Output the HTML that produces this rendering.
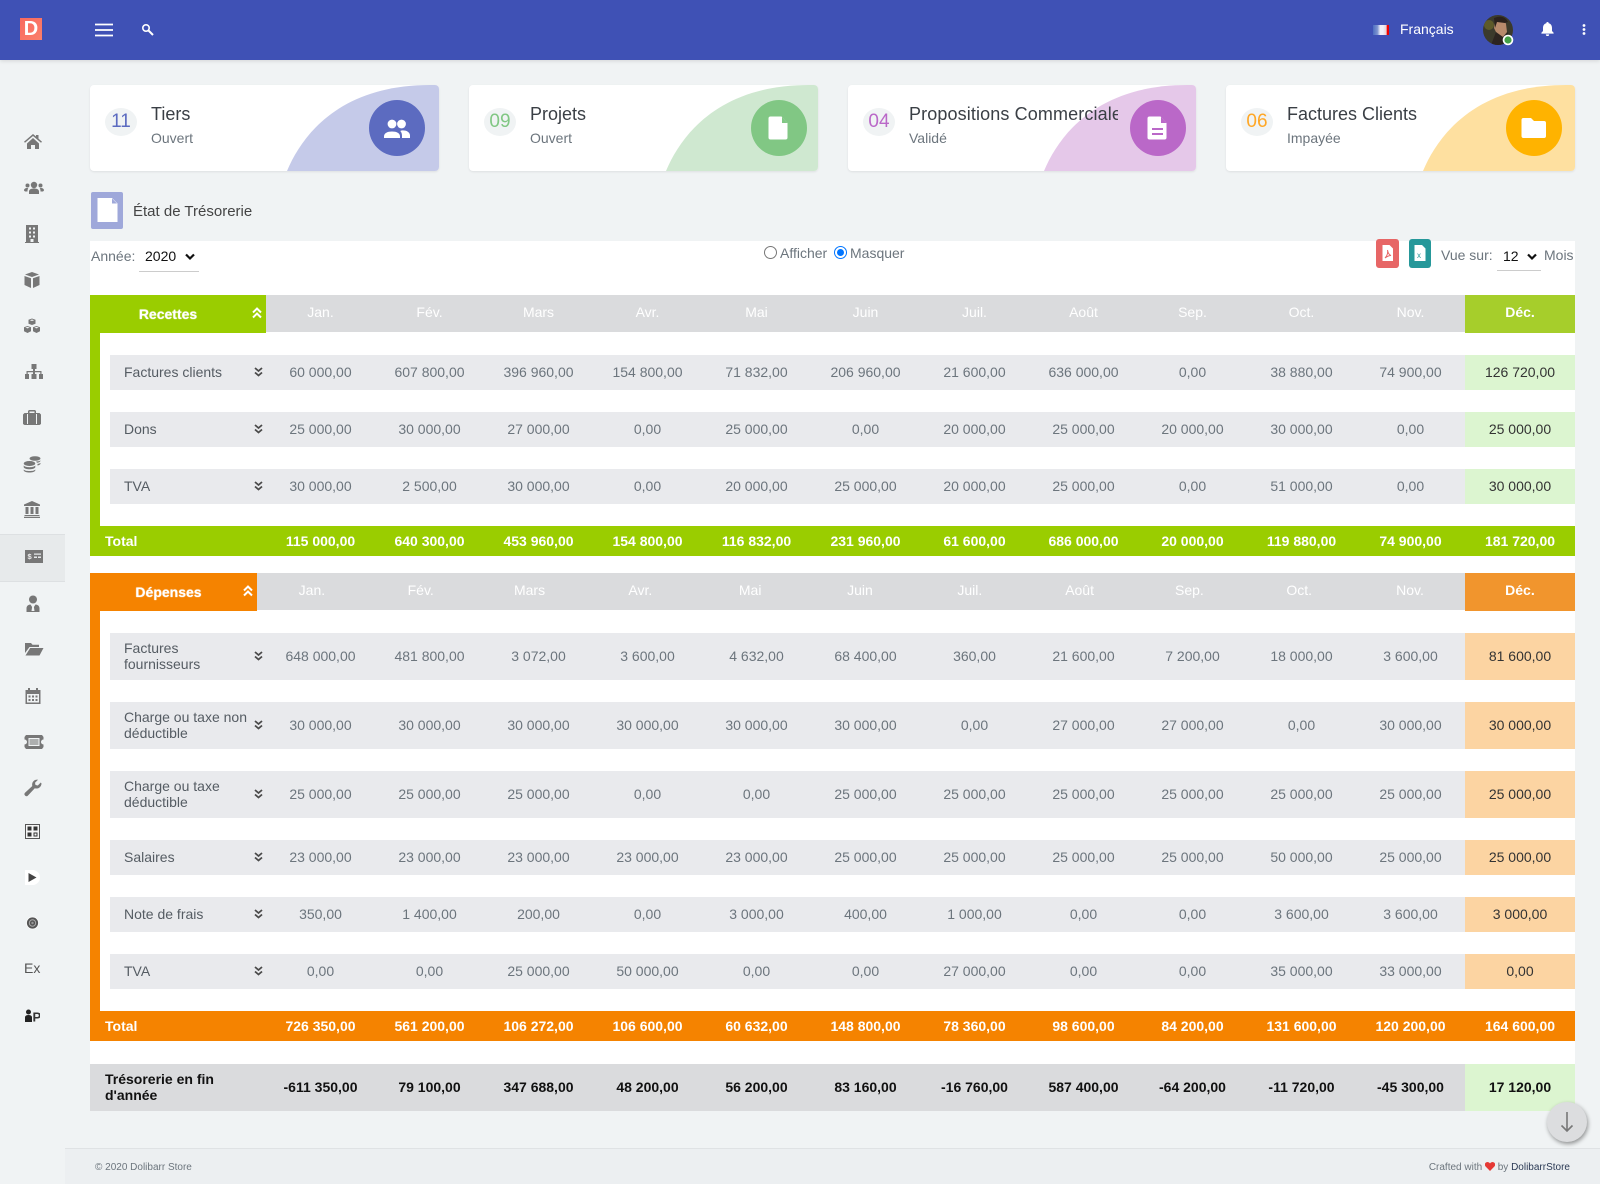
<!DOCTYPE html>
<html lang="fr"><head><meta charset="utf-8"><title>État de Trésorerie</title>
<style>
*{box-sizing:border-box}
html,body{margin:0;padding:0}
body{width:1600px;height:1184px;position:relative;overflow:hidden;background:#f0f3f4;font-family:"Liberation Sans",Arial,sans-serif;font-size:14px;color:#6c757d}
.a{position:absolute}
.top{left:0;top:0;width:1600px;height:60px;background:#3f51b5;box-shadow:0 1px 4px rgba(0,0,0,.12)}
.logo{left:20px;top:18px;width:22px;height:22px;background:linear-gradient(135deg,#f8695f,#fb7f6b);color:#fff;font-weight:bold;font-size:20px;line-height:22px;text-align:center}
.ic{position:absolute;left:23px;width:20px;height:20px;fill:#777}
.card{position:absolute;top:85px;height:86px;width:349px;background:#fff;border-radius:4px;box-shadow:0 1px 2px rgba(0,0,0,.08);overflow:hidden}
.sh{position:absolute;right:0;bottom:0;width:152px;height:86px}
.circ{position:absolute;left:279px;top:15px;width:56px;height:56px;border-radius:50%}
.num{position:absolute;left:15px;top:23px;width:32px;height:28px;border-radius:50%;background:#f0f3f4;font-size:19px;line-height:28px;text-align:center}
.ttl{position:absolute;left:61px;top:18px;font-size:18px;line-height:22px;color:#3a3f45;white-space:nowrap}
.sub{position:absolute;left:61px;top:45px;font-size:14px;line-height:17px;color:#6c757d}
.panel{left:90px;top:241px;width:1485px;height:870px;background:#fff}
.r,.t,.h{position:absolute;display:grid;align-items:center;text-align:center}
.r{left:110px;width:1465px;height:35px;background:#e9eaed;grid-template-columns:156px repeat(11,109px) 110px;color:#6c757d}
.r .l{text-align:left;padding-left:14px;padding-bottom:2px;line-height:16px;color:#555c63;padding-right:18px;position:relative}
.r .l svg{position:absolute;left:144px;top:50%;margin-top:-6px}
.r.tall{height:47px}
.r>span,.t>span,.h>span,.tr>span{display:flex;align-items:center;justify-content:center;height:100%}
.r>span,.tr>span{padding-bottom:2px}
.r>span:last-child{color:#333}
.g>span:last-child{background:#dcf5d0}
.o>span:last-child{background:#fcd4a2}
.t{left:90px;width:1485px;height:30px;grid-template-columns:176px repeat(11,109px) 110px;color:#fff;font-weight:bold}
.t b{text-align:left;padding-left:15px}
.h{left:90px;width:1485px;height:37px;background:#dadbdd;color:#fff}
.h>span{padding-bottom:4px}
.h>span:last-child{font-weight:bold}
.h .first{position:relative;display:flex;align-items:center;justify-content:center;font-weight:bold;height:38px;align-self:start;text-shadow:0 0 1px #fff}
.h .first svg{position:absolute;top:12px}
.tr{position:absolute;left:90px;top:1064px;width:1485px;height:47px;background:#dadbdd;display:grid;align-items:center;grid-template-columns:176px repeat(11,109px) 110px;color:#111;font-weight:bold;text-align:center}
.tr b{text-align:left;padding-left:15px;padding-bottom:2px;line-height:16px}
.tr>span:last-child{background:#dcf5d0}
.rad{position:absolute;top:246px;width:13px;height:13px;border-radius:50%;border:1px solid #767676;background:#fff}
.lb{position:absolute;white-space:nowrap;line-height:16px}
.foot{left:65px;top:1148px;width:1535px;height:36px;background:#eceff1;border-top:1px solid #dfe2e4;font-size:10px;color:#6c757d}
</style></head><body>

<div class="a top"></div>
<div class="a logo">D</div>
<svg class="a" style="left:95px;top:23px" width="18" height="14"><path d="M0 1.500h18M0 7h18M0 12.500h18" stroke="#fff" stroke-width="1.800"/></svg>
<svg class="a" style="left:141px;top:23px" width="13" height="13" fill="none" stroke="#fff"><circle cx="5" cy="5" r="3.200" stroke-width="1.600"/><path d="M7.500 7.500l4.500 4.500" stroke-width="2"/></svg>
<div class="a" style="left:1373px;top:25px;width:16px;height:10px;background:linear-gradient(90deg,#4d6ec0 0,#7f95d0 28%,#eef0f8 45%,#eef0f8 62%,#e6cfd2 84%,#e00 87%);"></div>
<div class="a" style="left:1400px;top:20px;font-size:14px;line-height:18px;color:#fff">Français</div>
<svg class="a" style="left:1483px;top:15px" width="32" height="32">
<defs><clipPath id="av"><circle cx="15" cy="15" r="15"/></clipPath></defs>
<g clip-path="url(#av)"><rect width="30" height="30" fill="#3b3a2c"/><circle cx="6" cy="10" r="5" fill="#5d5a2a"/><path d="M12 4q9-3 11 5l1 8-4 5-6-3-3-6z" fill="#b78a6c"/><path d="M11 3q10-4 14 4l-3 1-8-1-2 6z" fill="#2a211c"/><path d="M13 17l7 5 5-5 2 13H8z" fill="#2c2420"/></g>
<circle cx="25" cy="25" r="5.300" fill="#fff"/><circle cx="25" cy="25" r="3.600" fill="#43a047"/></svg>
<svg class="a" style="left:1541px;top:22px" width="13" height="14" fill="#fff"><path d="M6.500 0a1.200 1.200 0 0 1 1.200 1.300C10 1.900 11 3.800 11 6v3l1.600 1.800v.8H.4v-.8L2 9V6c0-2.200 1-4.100 3.300-4.700A1.200 1.200 0 0 1 6.500 0zM4.800 12.400h3.400a1.700 1.700 0 0 1-3.400 0z"/></svg>
<svg class="a" style="left:1582px;top:24px" width="4" height="11" fill="#fff"><circle cx="2" cy="1.500" r="1.400"/><circle cx="2" cy="5.500" r="1.400"/><circle cx="2" cy="9.500" r="1.400"/></svg>

<!-- sidebar -->
<div class="a" style="left:0;top:534px;width:65px;height:48px;background:#e7eaeb;border-top:1px solid #dde0e2;border-bottom:1px solid #dde0e2"></div>
<svg class="ic" style="top:131px" viewBox="0 0 20 20"><path d="M10 3l3 2.500V4h2.500v3.600L19 10.800l-1 1-8-6.800-8 6.800-1-1zM4 12.500L10 7l6 5.500V18h-4v-4H8v4H4z"/></svg>
<svg class="ic" style="top:178px;left:24px" viewBox="0 0 20 20"><circle cx="10" cy="7" r="3.200"/><circle cx="3.500" cy="7.500" r="2"/><circle cx="16.500" cy="7.500" r="2"/><path d="M5 16v-2.500c0-2 2-3 5-3s5 1 5 3V16zM0 12.500c0-1.500 1-2.500 3.500-2.500l.8.500C3.500 11.300 3.500 12.300 3.500 13.500H1zM20 12.500c0-1.500-1-2.500-3.500-2.500l-.8.500c.8.800.8 1.800.8 3H19z"/></svg>
<svg class="ic" style="top:224px;left:22px" viewBox="0 0 20 20"><path fill-rule="evenodd" d="M4 1h12v17h1v1H3v-1h1zM7 3.500v2h2v-2zm4 0v2h2v-2zM7 7.500v2h2v-2zm4 0v2h2v-2zM7 11.500v2h2v-2zm4 0v2h2v-2zM8.500 15v3h3v-3z"/></svg>
<svg class="ic" style="top:270px;left:22px" viewBox="0 0 20 20"><path d="M10 2l7 2.500L10 7 3 4.500zM2.500 6L9 8.300V18l-6.500-3zM17.500 6v9L11 18V8.300z"/></svg>
<svg class="ic" style="top:316px;left:22px" viewBox="0 0 20 20"><path fill-rule="evenodd" d="M10 2.500l3.500 1.300v4L10 9 6.500 7.800v-4zM5.500 10l3.500 1.300v4L5.500 17 2 15.300v-4zM14.500 10l3.500 1.300v4L14.500 17 11 15.300v-4zM7.800 4.200L10 5l2.200-.8L10 3.500zM3.300 11.600l2.200.8 2.200-.8-2.200-.7zM12.300 11.600l2.200.8 2.200-.8-2.200-.7z"/></svg>
<svg class="ic" style="top:362px;left:24px" viewBox="0 0 20 20"><path d="M7.500 2h5v5H11v2h6.500v3H19v5h-4v-5h1.300v-1.800H11V12h1.500v5h-5v-5H9v-1.800H3.700V12H5v5H1v-5h1.500V9H9V7H7.500z"/></svg>
<svg class="ic" style="top:407px;left:22px" viewBox="0 0 20 20"><path fill-rule="evenodd" d="M7 3h6l1 1v2h3.500L19 7.500V17l-1.500 1h-15L1 17V7.500L2.500 6H6V4zM7.500 4.500V6h5V4.500zM5 7v10h1V7zm9 0v10h1V7z"/></svg>
<svg class="ic" style="top:454px;left:22px" viewBox="0 0 20 20"><ellipse cx="13" cy="4.500" rx="5.500" ry="2.300"/><path d="M18.500 6.500c0 1.200-1.500 2-3.500 2.300l-1-1.300c2 0 3.500-.4 4.500-1zM18.500 9.500c0 1-1.500 1.800-3 2v-1.600c1.500-.1 2.500-.5 3-1z"/><ellipse cx="7.500" cy="9.500" rx="5.800" ry="2.500"/><path d="M1.700 11.500c1 1.200 3.200 1.700 5.800 1.700s4.800-.5 5.800-1.700v1.800c-.6 1.300-3 2-5.800 2s-5.200-.7-5.800-2zM1.700 15.500c1 1.200 3.200 1.500 5.800 1.500s4.800-.3 5.800-1.500v1c-.6 1.300-3 2-5.800 2s-5.200-.7-5.800-2z"/></svg>
<svg class="ic" style="top:499px;left:22px" viewBox="0 0 20 20"><path fill-rule="evenodd" d="M10 2l8 3.500V7H2V5.500zM3.500 8h3v7h-3zM8.500 8h3v7h-3zM13.500 8h3v7h-3zM2.500 16h15v1h-15zM2 17.800h16V19H2z"/></svg>
<svg class="a" style="left:25px;top:550px" width="18" height="13" viewBox="0 0 18 13"><path fill="#777" fill-rule="evenodd" d="M0 0h18v13H0zM9 3.500v1.200h7V3.500zM9 6.500v1.500h3V6.500zM13 6.500v1.500h3V6.500z"/><text x="2.500" y="9" font-size="7.500" font-weight="bold" fill="#eee" font-family="Liberation Sans">$</text></svg>
<svg class="ic" style="top:594px" viewBox="0 0 20 20"><circle cx="10" cy="5.500" r="4"/><path fill-rule="evenodd" d="M3.500 18v-3.500c0-2.500 1.500-3.800 4-4l1.600 2.500-.6 4h3l-.6-4 1.600-2.500c2.500.2 4 1.500 4 4V18z"/></svg>
<svg class="ic" style="top:639px;left:24px" viewBox="0 0 20 20"><path d="M1 4h6l1.500 1.700H15V8H5.500L1 14zM1.500 16.500L6.200 9H19.500l-4 7.500z"/></svg>
<svg class="ic" style="top:686px" viewBox="0 0 20 20"><path fill-rule="evenodd" d="M5 2h2v2h6V2h2v2h2.500v14h-15V4H5zM4 8v8.500h12V8zM5.500 9.500h2v2h-2zm3.500 0h2v2H9zm3.500 0h2v2h-2zM5.500 13h2v2h-2zM9 13h2v2H9zm3.500 0h2v2h-2z"/></svg>
<svg class="ic" style="top:732px;left:24px" viewBox="0 0 20 20"><path fill-rule="evenodd" d="M2 3h16l1.500 2v2.500a2 2 0 0 0 0 5V15L18 17H2l-1.500-2v-2.500a2 2 0 0 0 0-5V5zM4.500 6v8h11V6z"/><rect x="5.500" y="7" width="9" height="6" fill="#777" opacity=".55"/></svg>
<svg class="ic" style="top:778px" viewBox="0 0 20 20"><path d="M18.500 5.500a5 5 0 0 1-6.700 4.700L5 17.500a2 2 0 0 1-3-2.700l7.300-6.800A5 5 0 0 1 15 1.700l-3 3 .5 2.300 2.300.5 3-3a5 5 0 0 1 .7 1z"/></svg>
<svg class="a" style="left:25px;top:824px" width="15" height="15"><rect x=".5" y=".5" width="14" height="14" fill="#f5f5f5" stroke="#555"/><path fill="#333" d="M2.500 2.500h4v4h-4zM8.500 2.500h4v4h-4zM2.500 8.500h4v4h-4z"/><path fill="none" stroke="#333" d="M9 9h3v3H9z"/></svg>
<svg class="a" style="left:25px;top:870px" width="15" height="15"><path fill="#fff" d="M0 0h9q6 2 6 7.500T9 15H0z"/><path fill="#444" d="M3.500 3l8 4.500-8 4.500z"/></svg>
<svg class="a" style="left:26px;top:916px" width="13" height="14"><circle cx="6.500" cy="7" r="6.300" fill="#fff"/><circle cx="6.500" cy="7" r="5.600" fill="#555"/><circle cx="6.500" cy="7" r="3.200" fill="none" stroke="#aaa"/><circle cx="6.500" cy="7" r="1.200" fill="#999"/></svg>
<div class="a" style="left:24px;top:960px;font-size:14px;line-height:16px;color:#555">Ex</div>
<svg class="a" style="left:25px;top:1009px" width="15" height="14"><circle cx="3.500" cy="3" r="2.500" fill="#222"/><path fill="#222" d="M0 13V8.500C0 6.800 1.200 6 3.500 6S7 6.800 7 8.500V13z"/><text x="7.500" y="12.500" font-size="13" font-weight="bold" fill="#333" font-family="Liberation Sans">P</text></svg>

<!-- cards -->
<div class="card" style="left:90px"><svg class="sh" viewBox="0 0 152 86"><path fill="#c5cae9" d="M0 86C15 50 53 0 143 0H152V86Z"/></svg><div class="circ" style="background:#5c6bc0"><svg width="56" height="56" fill="#fff"><circle cx="23" cy="24" r="4.400"/><circle cx="32.500" cy="24" r="4.400"/><path d="M15 38v-1.500c0-3.500 3.500-5 8-5s8 1.500 8 5V38z"/><path d="M32.500 30.500c3.500-.5 8.500 1 8.500 5V38h-8v-2c0-2-.5-4-1.800-5z"/></svg></div><div class="num" style="color:#5c6bc0">11</div><div class="ttl">Tiers</div><div class="sub">Ouvert</div></div>
<div class="card" style="left:469px"><svg class="sh" viewBox="0 0 152 86"><path fill="#cfe8d0" d="M0 86C15 50 53 0 143 0H152V86Z"/></svg><div class="circ" style="left:282px;background:#81c784"><svg width="56" height="56" fill="#fff"><path d="M19.500 16.500h11l6 6.500v14.500a2 2 0 0 1-2 2h-15a2 2 0 0 1-2-2v-19a2 2 0 0 1 2-2z"/><path fill="#81c784" d="M31 17v6h5.500z"/></svg></div><div class="num" style="color:#81c784">09</div><div class="ttl">Projets</div><div class="sub">Ouvert</div></div>
<div class="card" style="left:848px;width:348px"><svg class="sh" viewBox="0 0 152 86"><path fill="#e5c8e9" d="M0 86C15 50 53 0 143 0H152V86Z"/></svg><div class="circ" style="left:282px;background:#ba68c8"><svg width="56" height="56" fill="#fff"><path d="M19.500 16.500h11l6 6.500v14.500a2 2 0 0 1-2 2h-15a2 2 0 0 1-2-2v-19a2 2 0 0 1 2-2z"/><path fill="#ba68c8" d="M31 17v6h5.500zM22 28h11v2H22zM22 33h11v2H22z"/></svg></div><div class="num" style="color:#ba68c8">04</div><div class="ttl" style="width:209px;overflow:hidden;letter-spacing:.12px">Propositions Commerciale</div><div class="sub">Validé</div></div>
<div class="card" style="left:1226px"><svg class="sh" viewBox="0 0 152 86"><path fill="#fee0a0" d="M0 86C15 50 53 0 143 0H152V86Z"/></svg><div class="circ" style="left:280px;background:#ffb300"><svg width="56" height="56" fill="#fff"><path d="M17.500 18h7.500l3 3h10a2 2 0 0 1 2 2v13a2 2 0 0 1-2 2h-20.500a2 2 0 0 1-2-2V20a2 2 0 0 1 2-2z"/></svg></div><div class="num" style="color:#ffa726">06</div><div class="ttl">Factures Clients</div><div class="sub">Impayée</div></div>

<!-- title -->
<div class="a" style="left:91px;top:192px;width:32px;height:37px;background:#9fa8da;border-radius:2px"><svg width="32" height="37" fill="#fff"><path d="M6.500 6h14.500l5.500 5.500V30H6.500z"/><path fill="#9fa8da" d="M21 6.500v5h5z"/></svg></div>
<div class="lb" style="left:133px;top:203px;font-size:15px;line-height:18px;color:#444">État de Trésorerie</div>

<div class="a panel"></div>
<div class="lb" style="left:91px;top:248px">Année:</div>
<div class="lb" style="left:145px;top:248px;color:#111">2020</div>
<svg class="a" style="left:185px;top:253px" width="10" height="8" fill="none" stroke="#111" stroke-width="2.200"><path d="M1 1.500l4 4 4-4"/></svg>
<div class="a" style="left:139px;top:271px;width:60px;height:1px;background:#ccc"></div>
<div class="rad" style="left:764px"></div><div class="lb" style="left:780px;top:245px">Afficher</div>
<div class="rad" style="left:834px;border:1.500px solid #0075ff"><div class="a" style="left:1.500px;top:1.500px;width:7px;height:7px;border-radius:50%;background:#0075ff"></div></div><div class="lb" style="left:850px;top:245px">Masquer</div>
<div class="a" style="left:1376px;top:239px;width:23px;height:29px;background:#e76666;border-radius:3px"><svg width="23" height="29" fill="#fff"><path d="M6.500 6h7l3.500 3.500V22h-10.500z"/><path fill="none" stroke="#e76666" d="M9 19c2-2 3-5 2.500-8 .5 3 2 5 3.500 5.500-2 0-4 1-6 2.500z"/></svg></div>
<div class="a" style="left:1409px;top:239px;width:22px;height:29px;background:#26989a;border-radius:3px"><svg width="22" height="29" fill="#fff"><path d="M5.500 6h7.500l3.500 3.500V22H5.500z"/><text x="8" y="19" font-size="8" fill="#26989a" font-family="Liberation Sans">x</text></svg></div>
<div class="lb" style="left:1441px;top:247px">Vue sur:</div>
<div class="lb" style="left:1503px;top:248px;color:#111">12</div>
<svg class="a" style="left:1527px;top:253px" width="10" height="8" fill="none" stroke="#111" stroke-width="2.200"><path d="M1 1.500l4 4 4-4"/></svg>
<div class="a" style="left:1497px;top:270px;width:44px;height:1px;background:#ccc"></div>
<div class="lb" style="left:1544px;top:247px">Mois</div>

<svg width="0" height="0" style="position:absolute"><defs>
<symbol id="dn" viewBox="0 0 9 10"><path d="M1 1l3.500 3L8 1M1 5.500l3.500 3 3.500-3" fill="none" stroke="#4a4a4a" stroke-width="1.800"/></symbol>
<symbol id="up" viewBox="0 0 10 12"><path d="M1 5.500L5 1.500l4 4M1 10.500l4-4 4 4" fill="none" stroke="#fff" stroke-width="2"/></symbol>
</defs></svg>

<!-- Recettes -->
<div class="a" style="left:90px;top:333px;width:10px;height:193px;background:#9acd00"></div>
<div class="h" style="top:295px;grid-template-columns:176px repeat(11,109px) 110px"><div class="first" style="background:#9acd00;padding-right:20px">Recettes<svg style="left:162px" width="10" height="12"><use href="#up"/></svg></div><span>Jan.</span><span>Fév.</span><span>Mars</span><span>Avr.</span><span>Mai</span><span>Juin</span><span>Juil.</span><span>Août</span><span>Sep.</span><span>Oct.</span><span>Nov.</span><span style="background:#a6ce2b">Déc.</span></div>

<div class="r g" style="top:355px"><div class="l">Factures clients<svg width="9" height="10"><use href="#dn"/></svg></div><span>60 000,00</span><span>607 800,00</span><span>396 960,00</span><span>154 800,00</span><span>71 832,00</span><span>206 960,00</span><span>21 600,00</span><span>636 000,00</span><span>0,00</span><span>38 880,00</span><span>74 900,00</span><span>126 720,00</span></div>
<div class="r g" style="top:412px"><div class="l">Dons<svg width="9" height="10"><use href="#dn"/></svg></div><span>25 000,00</span><span>30 000,00</span><span>27 000,00</span><span>0,00</span><span>25 000,00</span><span>0,00</span><span>20 000,00</span><span>25 000,00</span><span>20 000,00</span><span>30 000,00</span><span>0,00</span><span>25 000,00</span></div>
<div class="r g" style="top:469px"><div class="l">TVA<svg width="9" height="10"><use href="#dn"/></svg></div><span>30 000,00</span><span>2 500,00</span><span>30 000,00</span><span>0,00</span><span>20 000,00</span><span>25 000,00</span><span>20 000,00</span><span>25 000,00</span><span>0,00</span><span>51 000,00</span><span>0,00</span><span>30 000,00</span></div>
<div class="t" style="top:526px;background:#9acd00"><b>Total</b><span>115 000,00</span><span>640 300,00</span><span>453 960,00</span><span>154 800,00</span><span>116 832,00</span><span>231 960,00</span><span>61 600,00</span><span>686 000,00</span><span>20 000,00</span><span>119 880,00</span><span>74 900,00</span><span>181 720,00</span></div>

<!-- Depenses -->
<div class="a" style="left:90px;top:611px;width:10px;height:400px;background:#f58300"></div>
<div class="h" style="top:573px;grid-template-columns:167px repeat(11,109.820px) 110px"><div class="first" style="background:#f58300;padding-right:10px">Dépenses<svg style="left:153px" width="10" height="12"><use href="#up"/></svg></div><span>Jan.</span><span style="padding-right:2px">Fév.</span><span style="padding-right:4px">Mars</span><span style="padding-right:2px">Avr.</span><span style="padding-right:2px">Mai</span><span style="padding-right:2px">Juin</span><span style="padding-right:2px">Juil.</span><span style="padding-right:2px">Août</span><span style="padding-right:2px">Sep.</span><span style="padding-right:2px">Oct.</span><span>Nov.</span><span style="background:#f1952d;font-weight:bold">Déc.</span></div>

<div class="r o tall" style="top:633px"><div class="l">Factures fournisseurs<svg width="9" height="10"><use href="#dn"/></svg></div><span>648 000,00</span><span>481 800,00</span><span>3 072,00</span><span>3 600,00</span><span>4 632,00</span><span>68 400,00</span><span>360,00</span><span>21 600,00</span><span>7 200,00</span><span>18 000,00</span><span>3 600,00</span><span>81 600,00</span></div>
<div class="r o tall" style="top:702px"><div class="l" style="padding-right:0">Charge ou taxe non déductible<svg width="9" height="10"><use href="#dn"/></svg></div><span>30 000,00</span><span>30 000,00</span><span>30 000,00</span><span>30 000,00</span><span>30 000,00</span><span>30 000,00</span><span>0,00</span><span>27 000,00</span><span>27 000,00</span><span>0,00</span><span>30 000,00</span><span>30 000,00</span></div>
<div class="r o tall" style="top:771px"><div class="l">Charge ou taxe déductible<svg width="9" height="10"><use href="#dn"/></svg></div><span>25 000,00</span><span>25 000,00</span><span>25 000,00</span><span>0,00</span><span>0,00</span><span>25 000,00</span><span>25 000,00</span><span>25 000,00</span><span>25 000,00</span><span>25 000,00</span><span>25 000,00</span><span>25 000,00</span></div>
<div class="r o" style="top:840px"><div class="l">Salaires<svg width="9" height="10"><use href="#dn"/></svg></div><span>23 000,00</span><span>23 000,00</span><span>23 000,00</span><span>23 000,00</span><span>23 000,00</span><span>25 000,00</span><span>25 000,00</span><span>25 000,00</span><span>25 000,00</span><span>50 000,00</span><span>25 000,00</span><span>25 000,00</span></div>
<div class="r o" style="top:897px"><div class="l">Note de frais<svg width="9" height="10"><use href="#dn"/></svg></div><span>350,00</span><span>1 400,00</span><span>200,00</span><span>0,00</span><span>3 000,00</span><span>400,00</span><span>1 000,00</span><span>0,00</span><span>0,00</span><span>3 600,00</span><span>3 600,00</span><span>3 000,00</span></div>
<div class="r o" style="top:954px"><div class="l">TVA<svg width="9" height="10"><use href="#dn"/></svg></div><span>0,00</span><span>0,00</span><span>25 000,00</span><span>50 000,00</span><span>0,00</span><span>0,00</span><span>27 000,00</span><span>0,00</span><span>0,00</span><span>35 000,00</span><span>33 000,00</span><span>0,00</span></div>
<div class="t" style="top:1011px;background:#f58300"><b>Total</b><span>726 350,00</span><span>561 200,00</span><span>106 272,00</span><span>106 600,00</span><span>60 632,00</span><span>148 800,00</span><span>78 360,00</span><span>98 600,00</span><span>84 200,00</span><span>131 600,00</span><span>120 200,00</span><span>164 600,00</span></div>

<div class="tr"><b>Trésorerie en fin d'année</b><span>-611 350,00</span><span>79 100,00</span><span>347 688,00</span><span>48 200,00</span><span>56 200,00</span><span>83 160,00</span><span>-16 760,00</span><span>587 400,00</span><span>-64 200,00</span><span>-11 720,00</span><span>-45 300,00</span><span>17 120,00</span></div>

<!-- footer -->
<div class="a foot"><div class="a" style="left:30px;top:12px;line-height:13px">© 2020 Dolibarr Store</div><div class="a" style="right:30px;top:12px;line-height:13px;white-space:nowrap">Crafted with <svg width="10" height="9" style="vertical-align:-1px"><path fill="#e53935" d="M5 9L.6 4.500a2.700 2.700 0 0 1 0-3.700 2.700 2.700 0 0 1 3.800 0l.6.600.6-.6a2.700 2.700 0 0 1 3.800 0 2.700 2.700 0 0 1 0 3.700z"/></svg> by <span style="color:#2b3a55">DolibarrStore</span></div></div>

<div class="a" style="left:1547px;top:1102px;width:40px;height:40px;border-radius:50%;background:#dcdddf;box-shadow:1px 2px 4px rgba(0,0,0,.4)"><svg width="40" height="40" fill="none" stroke="#777" stroke-width="1.600"><path d="M20 10v19M14.500 23.500L20 29l5.500-5.500"/></svg></div>

</body></html>
